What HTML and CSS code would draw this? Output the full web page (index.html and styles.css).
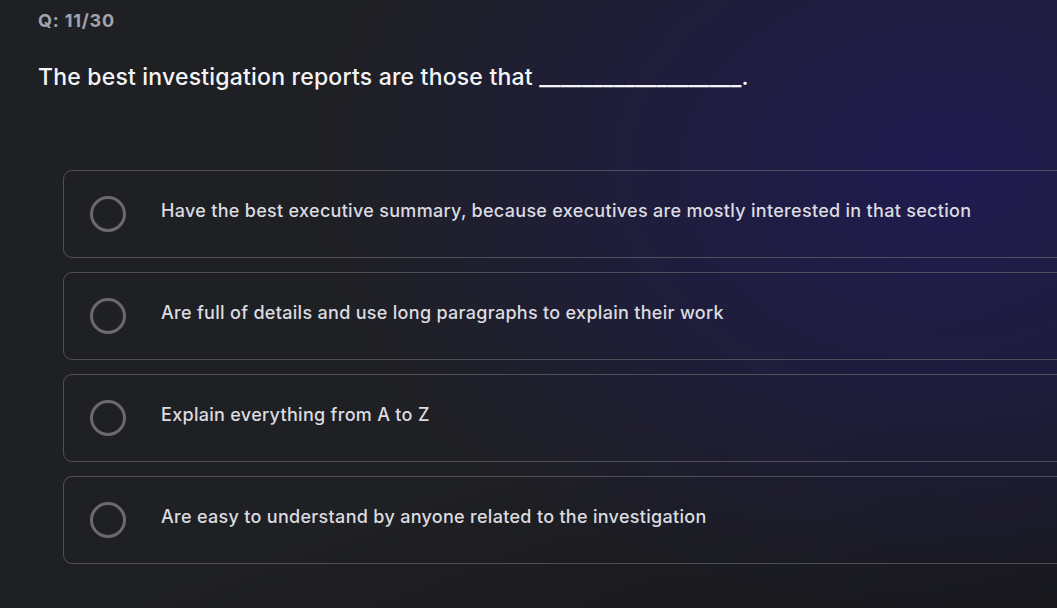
FILE: index.html
```html
<!DOCTYPE html>
<html>
<head>
<meta charset="utf-8">
<link rel="stylesheet" href="styles.css">
</head>
<body>
<main class="page">
  <div class="counter">Q: 11/30</div>
  <h1 class="question">The best investigation reports are those that <span class="blank">___________________</span>.</h1>
  <div class="options">
    <label class="option"><span class="radio"></span><span class="text">Have the best executive summary, because executives are mostly interested in that section</span></label>
    <label class="option"><span class="radio"></span><span class="text">Are full of details and use long paragraphs to explain their work</span></label>
    <label class="option"><span class="radio"></span><span class="text">Explain everything from A to Z</span></label>
    <label class="option"><span class="radio"></span><span class="text">Are easy to understand by anyone related to the investigation</span></label>
  </div>
</main>
</body>
</html>
```
FILE: styles.css
```css
html, body {
  margin: 0;
  height: 100%;
  overflow: hidden;
}
body {
  background-color: #1f2024;
  background-image:
    radial-gradient(ellipse 60% 75% at 90% 28%, rgba(31, 27, 80, 1), rgba(31, 27, 80, 0.6) 45%, rgba(31, 27, 80, 0) 100%),
    linear-gradient(160deg, rgba(0,0,0,0) 65%, rgba(10,10,12,0.4) 100%);
  font-family: Inter, "Noto Sans", sans-serif;
  color: #f2f2f4;
}
.page {
  padding: 9px 0 0 38px;
}
.counter {
  font-size: 18px;
  font-weight: 700;
  color: #a2a2ad;
  line-height: 24px;
  letter-spacing: 0.8px;
}
.question {
  margin: 29px 0 0 0;
  font-size: 23px;
  font-weight: 500;
  line-height: 30px;
  color: #f4f4f6;
  letter-spacing: 0.2px;
}
.blank {
  letter-spacing: 0;
}
.options {
  margin: 78px 0 0 25px;
  width: 1020px;
  display: flex;
  flex-direction: column;
  gap: 14px;
}
.option {
  box-sizing: border-box;
  height: 88px;
  border: 1px solid rgba(110, 110, 115, 0.6);
  border-radius: 9px;
  display: flex;
  align-items: center;
  padding-left: 26px;
}
.radio {
  box-sizing: border-box;
  width: 36px;
  height: 36px;
  border: 3px solid #6a6a6c;
  border-radius: 50%;
  flex: none;
}
.text {
  margin-left: 35px;
  margin-top: -8px;
  font-size: 18px;
  font-weight: 500;
  color: #dcdce0;
  letter-spacing: 0.3px;
}
```
